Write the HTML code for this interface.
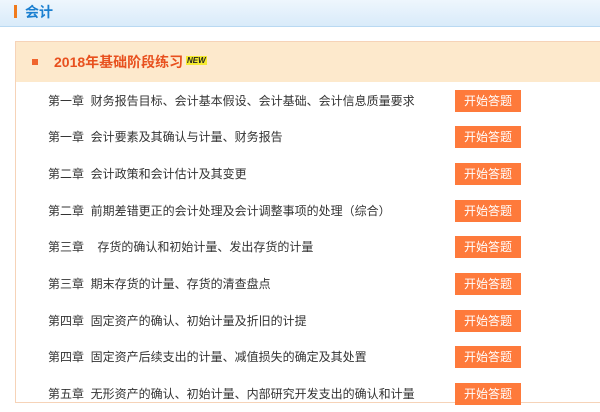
<!DOCTYPE html>
<html><head><meta charset="utf-8"><style>
*{margin:0;padding:0;box-sizing:border-box}
body{width:600px;height:412px;overflow:hidden;background:#fff;font-family:"Liberation Sans","Noto Sans CJK SC",sans-serif;position:relative}
.top{position:absolute;left:0;top:0;width:600px;height:27px;background:linear-gradient(#eef6fd,#d9ebfa);border-bottom:1px solid #b9d9f2}
.top .bar{position:absolute;left:14px;top:5px;width:3px;height:13px;background:#f07a1c}
.top .t{position:absolute;left:25px;top:4px;font-size:14px;font-weight:bold;color:#1a7fd0;line-height:16px}
.panel{position:absolute;left:15px;top:41px;width:600px;height:362px;border:1px solid #f6d3b8;border-right:none}
.hd{height:40px;background:#fde9cc;position:relative}
.hd .sq{position:absolute;left:16px;top:17px;width:6px;height:6px;background:#f0652e}
.hd .ti{position:absolute;left:38px;top:12px;font-size:14px;font-weight:bold;color:#e8501e;line-height:16px}
.new{position:absolute;left:170px;top:14px;font-size:8px;font-weight:bold;color:#222;background:#f5ea30;padding:0 1px;line-height:9px;font-style:italic}
.row{position:absolute;left:32px;font-size:12px;color:#333;line-height:14px}
.btn{position:absolute;left:439px;width:66px;height:22px;background:#fe7a3b;color:#fff;font-size:12px;text-align:center;line-height:22px}
</style></head><body>
<div class="top"><div class="bar"></div><div class="t">会计</div></div>
<div class="panel">
<div class="hd"><div class="sq"></div><div class="ti">2018年基础阶段练习</div><div class="new">NEW</div></div>
<div class="row" style="top:52px">第一章&nbsp; 财务报告目标、会计基本假设、会计基础、会计信息质量要求</div><div class="btn" style="top:48px">开始答题</div>
<div class="row" style="top:88px">第一章&nbsp; 会计要素及其确认与计量、财务报告</div><div class="btn" style="top:84px">开始答题</div>
<div class="row" style="top:125px">第二章&nbsp; 会计政策和会计估计及其变更</div><div class="btn" style="top:121px">开始答题</div>
<div class="row" style="top:162px">第二章&nbsp; 前期差错更正的会计处理及会计调整事项的处理（综合）</div><div class="btn" style="top:158px">开始答题</div>
<div class="row" style="top:198px">第三章&nbsp;&nbsp;&nbsp; 存货的确认和初始计量、发出存货的计量</div><div class="btn" style="top:194px">开始答题</div>
<div class="row" style="top:235px">第三章&nbsp; 期末存货的计量、存货的清查盘点</div><div class="btn" style="top:231px">开始答题</div>
<div class="row" style="top:272px">第四章&nbsp; 固定资产的确认、初始计量及折旧的计提</div><div class="btn" style="top:268px">开始答题</div>
<div class="row" style="top:308px">第四章&nbsp; 固定资产后续支出的计量、减值损失的确定及其处置</div><div class="btn" style="top:304px">开始答题</div>
<div class="row" style="top:345px">第五章&nbsp; 无形资产的确认、初始计量、内部研究开发支出的确认和计量</div><div class="btn" style="top:341px">开始答题</div>
</div>
</body></html>
